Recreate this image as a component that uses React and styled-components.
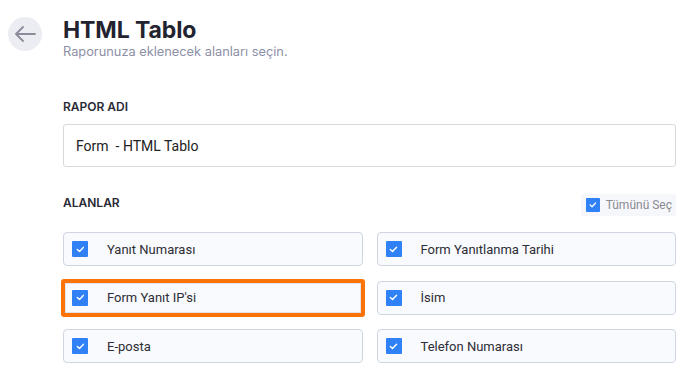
import React from 'react';
import styled, { createGlobalStyle } from 'styled-components';

const GlobalStyle = createGlobalStyle`
  * { box-sizing: border-box; }
  body {
    margin: 0;
    background: #ffffff;
    font-family: Inter, "Liberation Sans", sans-serif;
  }
`;

const Page = styled.div`
  display: grid;
  grid-template-columns: 34px 1fr;
  column-gap: 21px;
  padding: 17px 24px 0 8px;
`;

const BackButton = styled.button`
  width: 34px;
  height: 34px;
  border-radius: 50%;
  border: none;
  background: #ececf3;
  display: flex;
  align-items: center;
  justify-content: center;
  padding: 0;
  cursor: pointer;
`;

const Content = styled.div`
  display: flex;
  flex-direction: column;
`;

const Title = styled.h1`
  margin: 0;
  font-size: 23px;
  line-height: 26px;
  font-weight: 700;
  color: #23232f;
  letter-spacing: -0.1px;
`;

const Subtitle = styled.p`
  margin: 1px 0 0;
  font-size: 12.8px;
  line-height: 16px;
  color: #8c8fa6;
`;

const Label = styled.div`
  font-size: 12px;
  line-height: 16px;
  font-weight: 600;
  color: #2a2a36;
  margin-top: ${(p) => p.$top || 0}px;
`;

const TextInput = styled.div`
  margin-top: 9px;
  height: 43px;
  border: 1px solid #d9d9dc;
  border-radius: 3px;
  padding: 0 12px;
  display: flex;
  align-items: center;
  font-family: Roboto, "Liberation Sans", sans-serif;
  font-size: 14px;
  color: #222;
  white-space: pre;
`;

const SectionHead = styled.div`
  margin-top: 27px;
  display: flex;
  justify-content: space-between;
  align-items: flex-start;
  height: 22px;
`;

const SelectAll = styled.label`
  display: flex;
  align-items: center;
  gap: 6px;
  height: 22px;
  padding: 0 4px 0 5px;
  background: #f6f7fb;
  border-radius: 2px;
  font-family: Roboto, "Liberation Sans", sans-serif;
  font-size: 12px;
  color: #8a8a92;
`;

const Grid = styled.div`
  margin-top: 16px;
  display: grid;
  grid-template-columns: 1fr 1fr;
  column-gap: 14px;
  row-gap: 14.5px;
`;

const Card = styled.label`
  height: 34px;
  display: flex;
  align-items: center;
  gap: 19px;
  padding: 0 8px;
  background: #f9fafd;
  border: 1px solid #cfd5e2;
  border-radius: 4px;
  font-family: Roboto, "Liberation Sans", sans-serif;
  font-size: 13px;
  color: #2d2d35;
  ${(p) =>
    p.$active &&
    `
    outline: 4px solid #fc7307;
    outline-offset: -2px;
    border-radius: 1px;
    box-shadow: inset 0 0 0 2px #e1e3e8;
  `}
`;

const Box = styled.span`
  width: ${(p) => p.$size}px;
  height: ${(p) => p.$size}px;
  flex: none;
  background: #3181f6;
  border-radius: 1px;
  display: flex;
  align-items: center;
  justify-content: center;
`;

function Check({ size = 16 }) {
  return (
    <Box $size={size}>
      <svg width={size * 0.55} height={size * 0.55} viewBox="0 0 10 10" fill="none">
        <path d="M1.5 5.2 4 7.5 8.6 2.6" stroke="#fff" strokeWidth="1.6" strokeLinecap="round" strokeLinejoin="round" />
      </svg>
    </Box>
  );
}

const fields = [
  { name: 'Yanıt Numarası' },
  { name: 'Form Yanıtlanma Tarihi' },
  { name: "Form Yanıt IP'si", active: true },
  { name: 'İsim' },
  { name: 'E-posta' },
  { name: 'Telefon Numarası' },
];

export default function App() {
  return (
    <>
      <GlobalStyle />
      <Page>
        <BackButton aria-label="Geri">
          <svg width="22" height="16" viewBox="0 0 22 16" fill="none">
            <path d="M21 8H2M9 1 2 8l7 7" stroke="#8b8c9c" strokeWidth="1.8" strokeLinecap="round" strokeLinejoin="round" />
          </svg>
        </BackButton>
        <Content>
          <Title>HTML Tablo</Title>
          <Subtitle>Raporunuza eklenecek alanları seçin.</Subtitle>
          <Label $top={39}>RAPOR ADI</Label>
          <TextInput>Form  - HTML Tablo</TextInput>
          <SectionHead>
            <Label $top={1}>ALANLAR</Label>
            <SelectAll>
              <Check size={14} />
              Tümünü Seç
            </SelectAll>
          </SectionHead>
          <Grid>
            {fields.map((f) => (
              <Card key={f.name} $active={f.active}>
                <Check />
                {f.name}
              </Card>
            ))}
          </Grid>
        </Content>
      </Page>
    </>
  );
}
